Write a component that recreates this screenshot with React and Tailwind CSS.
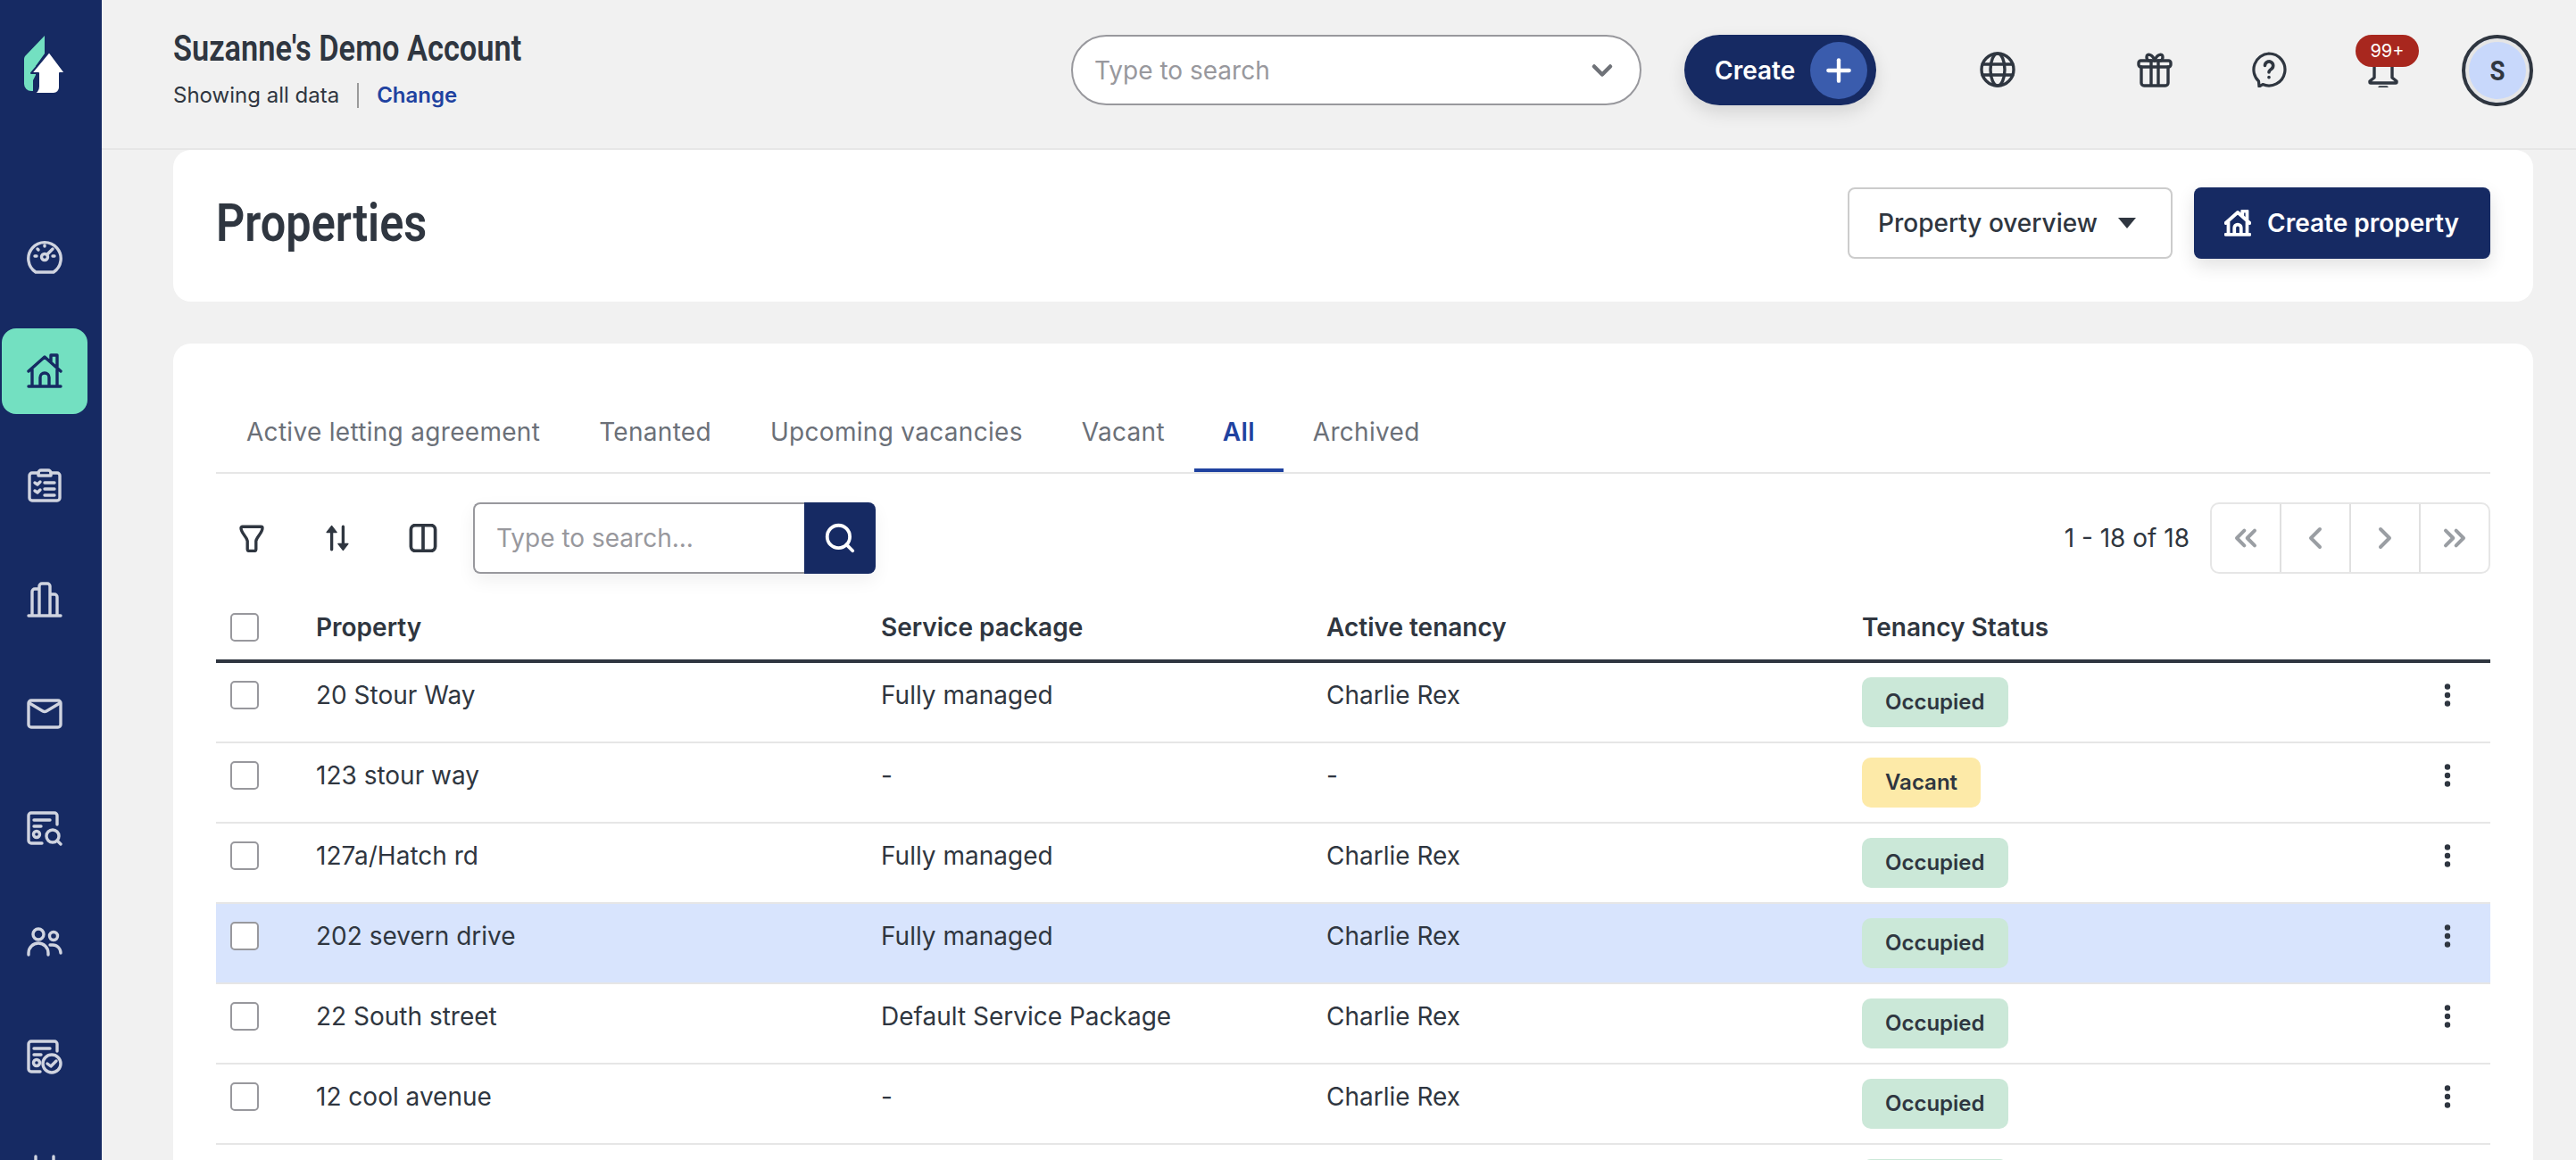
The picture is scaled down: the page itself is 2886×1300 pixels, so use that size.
import React from 'react'
import { ChevronDown, ChevronLeft, ChevronRight, ChevronsLeft, ChevronsRight, Plus, Search } from 'lucide-react'

const rows = [
  { name: '20 Stour Way', pkg: 'Fully managed', tenant: 'Charlie Rex', status: 'Occupied' },
  { name: '123 stour way', pkg: '-', tenant: '-', status: 'Vacant' },
  { name: '127a/Hatch rd', pkg: 'Fully managed', tenant: 'Charlie Rex', status: 'Occupied' },
  { name: '202 severn drive', pkg: 'Fully managed', tenant: 'Charlie Rex', status: 'Occupied', active: true },
  { name: '22 South street', pkg: 'Default Service Package', tenant: 'Charlie Rex', status: 'Occupied' },
  { name: '12 cool avenue', pkg: '-', tenant: 'Charlie Rex', status: 'Occupied' },
]

const tabs = ['Active letting agreement', 'Tenanted', 'Upcoming vacancies', 'Vacant', 'All', 'Archived']

const Icon = ({ children, className = 'w-10 h-10', sw = 3.4 }) => (
  <svg viewBox="0 0 40 40" fill="none" stroke="currentColor" strokeWidth={sw} strokeLinecap="round" strokeLinejoin="round" className={className}>
    {children}
  </svg>
)

const HomeIcon = (props) => (
  <Icon {...props}>
    <path d="M2 20 20 4l18 16M27 9V2h7v15M6 18v19M34 18v19M2 37h36M15 37V27a5 5 0 0 1 10 0v10" />
  </Icon>
)

const navIcons = [
  <Icon key="a">
    <path d="M10 37a18.2 18.2 0 1 1 20 0Z" />
    <circle cx="20" cy="20" r="3.5" />
    <path d="m23 17 6-6M20 7v1M9 19h2M29 19h2M12 11l1 1" />
  </Icon>,
  <HomeIcon key="b" />,
  <Icon key="c">
    <path d="M13 6H6a3 3 0 0 0-3 3v25a3 3 0 0 0 3 3h28a3 3 0 0 0 3-3V9a3 3 0 0 0-3-3h-7" />
    <path d="M13 9V6a3 3 0 0 1 3-3h8a3 3 0 0 1 3 3v3ZM9 17l3 2 3-3M9 26l3 2 3-3M20 17h11M20 24h11M20 31h11" />
  </Icon>,
  <Icon key="d">
    <path d="M2 38h36M6 37V11a3 3 0 0 1 3-3h5M14 37V5a3 3 0 0 1 3-3h6a3 3 0 0 1 3 3v32M26 14h5a3 3 0 0 1 3 3v20" />
  </Icon>,
  <Icon key="e">
    <rect x="2" y="5" width="36" height="30" rx="3" />
    <path d="m3 8 15 9a4 4 0 0 0 4 0l15-9" />
  </Icon>,
  <Icon key="f">
    <path d="M34 16V6a3 3 0 0 0-3-3H5a3 3 0 0 0-3 3v28a3 3 0 0 0 3 3h12M8 11h18M8 18h8" />
    <circle cx="11" cy="27" r="3.5" />
    <circle cx="29" cy="29" r="7" />
    <path d="m34 34 4 4" />
  </Icon>,
  <Icon key="g">
    <circle cx="13" cy="11" r="6" />
    <circle cx="30" cy="13" r="4.5" />
    <path d="M2 34v-2a11 11 0 0 1 22 0v2M26 23h3a9 9 0 0 1 9 9" />
  </Icon>,
  <Icon key="h">
    <path d="M34 14V6a3 3 0 0 0-3-3H5a3 3 0 0 0-3 3v28a3 3 0 0 0 3 3h10M8 11h18M8 18h8" />
    <circle cx="11" cy="27" r="3.5" />
    <circle cx="28" cy="28" r="10" />
    <path d="m23 28 4 3 6-6" />
  </Icon>,
  <Icon key="i">
    <path d="M10 4v30M30 4v30M4 36h32" />
  </Icon>,
]

const Logo = () => (
  <svg viewBox="0 0 46 66" className="w-[46px] h-[66px]">
    <path d="M23 0v20L13 34v10l-3 6v12H8a8 8 0 0 1-8-8V26a6 6 0 0 1 1-3Z" fill="#73e0c1" />
    <path d="M28 18 46 42h-6v16a7 7 0 0 1-7 7H9c4-1 7-4 7-8V42H8Z" fill="#fff" stroke="#162a63" strokeWidth="2" strokeLinejoin="round" />
  </svg>
)

const Sidebar = () => (
  <aside className="w-[114px] shrink-0 h-full overflow-hidden bg-[#162a63] pl-[2px] text-[#d0d4e0]">
    <div className="h-[240px] pt-[40px] pl-[25px]">
      <Logo />
    </div>
    <nav className="flex flex-col gap-8">
      {navIcons.map((icon, i) => (
        <div
          key={i}
          className={i === 1 ? 'w-[96px] h-[96px] shrink-0 rounded-[16px] bg-[#73e0c1] text-[#162a63] flex items-center justify-center' : 'w-[96px] h-[96px] shrink-0 flex items-center justify-center'}
        >
          {icon}
        </div>
      ))}
    </nav>
  </aside>
)

const Header = () => (
  <header className="h-[168px] shrink-0 border-b-2 border-[#e6e6e6] flex items-start pt-[39px] pl-[80px] pr-[48px] text-[#2f3640]">
    <div className="w-[1006px] -mt-[1px]">
      <h2 className="font-['Roboto',sans-serif] font-semibold text-[40px] leading-[32px] pt-[1px] mb-[20px] origin-left scale-x-[0.86]">Suzanne's Demo Account</h2>
      <div className="flex items-center text-[24px] leading-[32px]">
        <span>Showing all data</span>
        <span className="w-[2px] h-[28px] bg-[#9a9a9a] mx-5"></span>
        <span className="font-semibold text-[#1f42a0]">Change</span>
      </div>
    </div>
    <div className="w-[639px] h-[79px] rounded-full border-2 border-[#98989d] bg-white flex items-center justify-between pl-[24px] pr-[24px]">
      <span className="text-[28px] text-[#98989d]">Type to search</span>
      <ChevronDown size={36} strokeWidth={3} className="text-[#6f7278]" />
    </div>
    <div className="ml-12 w-[215px] h-[79px] rounded-full bg-[#162a63] shadow-[0_8px_20px_rgba(0,0,0,0.12)] flex items-center pl-[34px] pr-[10px] justify-between">
      <span className="text-[28px] font-semibold text-white">Create</span>
      <span className="w-[64px] h-[64px] rounded-full bg-[#3a5cad] flex items-center justify-center">
        <Plus size={40} strokeWidth={2.6} className="text-white" />
      </span>
    </div>
    <div className="ml-[116px] mt-[19px]">
      <Icon>
        <circle cx="20" cy="20" r="18" />
        <ellipse cx="20" cy="20" rx="8" ry="18" />
        <path d="M3 14h34M3 26h34" />
      </Icon>
    </div>
    <div className="ml-[136px] mt-[19px]">
      <Icon>
        <path d="M5 17v18a3 3 0 0 0 3 3h24a3 3 0 0 0 3-3V17M16 10v28M24 10v28" />
        <rect x="2" y="10" width="36" height="7" rx="2.5" />
        <path d="M20 10c-2-7-9-9-9-4 0 2 1 4 3 4M20 10c2-7 9-9 9-4 0 2-1 4-3 4" />
      </Icon>
    </div>
    <div className="ml-[88px] mt-[19px]">
      <Icon sw={3.2}>
        <path d="M20 2a18 18 0 1 1-7 34.600L9 39l-.5-6A18 18 0 0 1 20 2Z" />
        <path d="M15.500 15.500a4.600 4.600 0 1 1 7 4c-1.500 1-2.500 1.800-2.500 3.500" strokeWidth="3.600" />
        <path d="M20 28.500v.2" strokeWidth="3.600" />
      </Icon>
    </div>
    <div className="ml-[88px] mt-[19px] relative">
      <Icon>
        <path d="M10 10v19l-5 4v1a1 1 0 0 0 1 1h28a1 1 0 0 0 1-1v-1l-5-4V10M16 40h8" />
      </Icon>
      <span className="absolute -top-[19px] -left-[11px] w-[71px] h-[36px] rounded-[18px] bg-[#a8271e] text-white text-[20px] leading-[36px] text-center">99+</span>
    </div>
    <div className="ml-[68px] w-[80px] h-[80px] shrink-0 rounded-full border-4 border-[#2f3640] bg-[#c8d8fb] ring-4 ring-inset ring-[#e5e5e5] flex items-center justify-center font-['Roboto',sans-serif] font-bold text-[32px]">
      <span className="scale-x-[0.86]">S</span>
    </div>
  </header>
)

const Badge = ({ status }) => (
  <span className={status === 'Vacant' ? 'inline-block h-[56px] mt-4 px-[26px] rounded-[10px] bg-[#fdeaa8] text-[24px] font-semibold leading-[56px]' : 'inline-block h-[56px] mt-4 px-[26px] rounded-[10px] bg-[#cbe8d8] text-[24px] font-semibold leading-[56px]'}>{status}</span>
)

const Checkbox = ({ className = '' }) => (
  <span className={`block w-[32px] h-[32px] rounded-[5px] border-2 border-[#98989d] bg-white ${className}`}></span>
)

const Dots = () => (
  <svg viewBox="0 0 8 26" fill="#2f3640" className="w-[8px] h-[26px]">
    <circle cx="4" cy="3.500" r="3.200" />
    <circle cx="4" cy="13" r="3.200" />
    <circle cx="4" cy="22.500" r="3.200" />
  </svg>
)

const Table = () => (
  <div>
    <div className="grid grid-cols-[112px_633px_499px_600px_1fr] h-[76px] items-center border-b-4 border-[#2f3640] font-semibold text-[28px]">
      <div className="pl-[16px]"><Checkbox /></div>
      <div>Property</div>
      <div>Service package</div>
      <div>Active tenancy</div>
      <div>Tenancy Status</div>
    </div>
    {rows.map((row) => (
      <div
        key={row.name}
        className={row.active ? 'grid grid-cols-[112px_633px_499px_600px_1fr] h-[90px] border-b-2 border-[#e6e6e6] text-[28px] leading-10 bg-[#d8e4fd]' : 'grid grid-cols-[112px_633px_499px_600px_1fr] h-[90px] border-b-2 border-[#e6e6e6] text-[28px] leading-10'}
      >
        <div className="pl-[16px] pt-5"><Checkbox /></div>
        <div className="pt-4">{row.name}</div>
        <div className="pt-4">{row.pkg}</div>
        <div className="pt-4">{row.tenant}</div>
        <div className="flex justify-between items-start pr-[44px]">
          <Badge status={row.status} />
          <span className="pt-[23px]"><Dots /></span>
        </div>
      </div>
    ))}
    {/* next row is below the fold, only the top of its badge shows */}
    <div className="grid grid-cols-[112px_633px_499px_600px_1fr] h-[90px]">
      <div className="col-start-5">
        <span className="block w-[164px] h-[56px] mt-4 rounded-[10px] bg-[#cbe8d8]"></span>
      </div>
    </div>
  </div>
)

const Pager = () => (
  <div className="flex h-[80px] w-[314px] border-2 border-[#e6e6e6] rounded-[10px] divide-x-2 divide-[#e0e0e0] text-[#9a9ea3]">
    <span className="flex-1 flex items-center justify-center"><ChevronsLeft size={40} strokeWidth={2.4} /></span>
    <span className="flex-1 flex items-center justify-center"><ChevronLeft size={40} strokeWidth={2.4} /></span>
    <span className="flex-1 flex items-center justify-center"><ChevronRight size={40} strokeWidth={2.4} /></span>
    <span className="flex-1 flex items-center justify-center"><ChevronsRight size={40} strokeWidth={2.4} /></span>
  </div>
)

const App = () => {
  return (
    <div className="w-[2886px] h-[1300px] flex overflow-hidden bg-[#f1f1f1] font-['Inter',sans-serif] text-[#2f3640]">
      <Sidebar />
      <main className="flex-1 min-w-0 flex flex-col">
        <Header />
        <div className="pl-[80px] pr-[48px] flex flex-col gap-[47px]">
          <section className="h-[170px] rounded-[20px] bg-white px-[48px] pt-[42px] flex items-start justify-between">
            <h1 className="font-['Roboto',sans-serif] font-semibold text-[60px] leading-[80px] origin-left scale-x-[0.84]">Properties</h1>
            <div className="flex gap-6">
              <button className="w-[364px] h-[80px] rounded-[8px] border-2 border-[#cccccc] bg-white flex items-center justify-between pl-[32px] pr-[38px] text-[28px] font-medium">
                Property overview
                <svg viewBox="0 0 22 14" fill="#2f3640" className="w-[22px] h-[14px]"><path d="M1 1h20L11 13Z" /></svg>
              </button>
              <button className="w-[332px] h-[80px] rounded-[8px] bg-[#162a63] text-white flex items-center pl-[34px] gap-[18px] text-[28px] font-semibold shadow-[0_8px_20px_rgba(0,0,0,0.12)]">
                <HomeIcon className="w-[30px] h-[30px]" sw={5} />
                Create property
              </button>
            </div>
          </section>
          <section className="rounded-[20px] bg-white px-[48px] pt-[59px]">
            <div className="flex border-b-2 border-[#e6e6e6] pl-[1px]">
              {tabs.map((tab) => (
                <div
                  key={tab}
                  className={tab === 'All' ? 'px-[32px] pt-5 pb-[21px] leading-10 text-[28px] tracking-[0.3px] font-semibold text-[#1f42a0] border-b-4 border-[#1f42a0]' : 'px-[33px] pt-5 pb-[21px] leading-10 text-[28px] tracking-[0.3px] text-[#6b7078] border-b-4 border-transparent'}
                >
                  {tab}
                </div>
              ))}
            </div>
            <div className="mt-8 mb-6 flex items-center justify-between">
              <div className="flex items-center">
                <div className="flex items-center gap-16 pl-6">
                  <Icon className="w-8 h-8" sw={4.2}>
                    <path d="M7 4h26a2 2 0 0 1 2 2c0 7-8 12-9 18v12a2 2 0 0 1-2 2h-8a2 2 0 0 1-2-2V24C13 18 5 13 5 6a2 2 0 0 1 2-2Z" />
                  </Icon>
                  <Icon className="w-8 h-8" sw={4.2}>
                    <path d="M12 36V10M28 4v26" />
                    <path d="M5 12 12 3l7 9ZM21 28l7 9 7-9Z" fill="currentColor" strokeWidth="1.500" />
                  </Icon>
                  <Icon className="w-8 h-8" sw={4.6}>
                    <rect x="3" y="2" width="34" height="36" rx="6" />
                    <path d="M20 2v36" />
                  </Icon>
                </div>
                <div className="ml-10 flex h-[80px] w-[451px] rounded-[8px] shadow-[0_8px_20px_rgba(0,0,0,0.06)]">
                  <div className="flex-1 border-2 border-r-0 border-[#98989d] rounded-l-[8px] pl-[24px] flex items-center text-[28px] text-[#98989d]">Type to search...</div>
                  <div className="w-[80px] bg-[#162a63] rounded-r-[8px] flex items-center justify-center">
                    <Search size={38} strokeWidth={2.4} className="text-white" />
                  </div>
                </div>
              </div>
              <div className="flex items-center gap-[23px]">
                <span className="text-[28px]">1 - 18 of 18</span>
                <Pager />
              </div>
            </div>
            <Table />
          </section>
        </div>
      </main>
    </div>
  )
}

export default App
